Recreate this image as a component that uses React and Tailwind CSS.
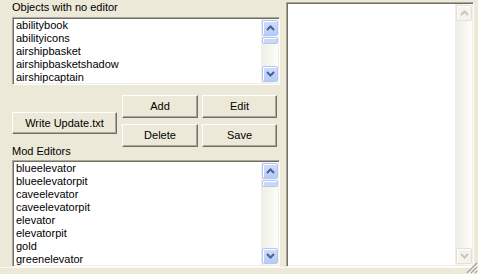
import React from 'react';

const noEditor = ['abilitybook', 'abilityicons', 'airshipbasket', 'airshipbasketshadow', 'airshipcaptain'];
const modEditors = ['blueelevator', 'blueelevatorpit', 'caveelevator', 'caveelevatorpit', 'elevator', 'elevatorpit', 'gold', 'greenelevator'];

const Arrow = ({ down, disabled }) => (
  <svg width="9" height="6" viewBox="0 0 9 6" className={down ? 'rotate-180' : ''}>
    <path d="M1 5 L4.5 1.5 L8 5" fill="none" stroke={disabled ? '#c9c7ba' : '#4d6185'} strokeWidth="2" />
  </svg>
);

const ScrollButton = ({ down, disabled }) => (
  <div
    className={
      disabled
        ? 'h-[16px] w-[16px] flex items-center justify-center rounded-[2px] border border-[#e2e0d6] bg-[#f4f3ee] shadow-[inset_1px_1px_0_#ffffff]'
        : 'h-[16px] w-[16px] flex items-center justify-center rounded-[2px] border border-[#b4c6f3] bg-gradient-to-b from-[#cfdcfd] to-[#b7cbf8] shadow-[inset_1px_1px_0_#ffffff]'
    }
  >
    <Arrow down={down} disabled={disabled} />
  </div>
);

const ScrollBar = ({ disabled }) => (
  <div className="w-[17px] h-full flex flex-col justify-between pt-[1px] pb-[1px] pl-[1px] bg-gradient-to-r from-[#eeede5] to-[#fdfdfa]">
    <div className="flex flex-col">
      <ScrollButton disabled={disabled} />
      {!disabled && (
        <div className="mt-[1px] h-[7px] w-[16px] rounded-[2px] border border-[#b4c6f3] bg-[#c8d7fc] shadow-[inset_1px_1px_0_#ffffff]" />
      )}
    </div>
    <ScrollButton down disabled={disabled} />
  </div>
);

const ListBox = ({ items, className }) => (
  <div
    className={`flex bg-white border border-t-[#aca899] border-l-[#aca899] border-r-white border-b-white shadow-[inset_1px_1px_0_#716f64,inset_-1px_-1px_0_#f1efe2] p-[1px] ${className}`}
  >
    <div className="flex-1 pl-[2px] overflow-hidden">
      {items.map((item) => (
        <div key={item} className="h-[13px] leading-[13px] whitespace-nowrap">{item}</div>
      ))}
    </div>
    <ScrollBar />
  </div>
);

const Button = ({ children, className }) => (
  <button
    className={`flex items-center justify-center bg-[#ece9d8] border border-t-white border-l-white border-r-[#716f64] border-b-[#716f64] shadow-[inset_-1px_-1px_0_#aca899] text-black ${className}`}
  >
    {children}
  </button>
);

export default function App() {
  return (
    <div className="w-[478px] h-[274px] bg-[#ece9d8] relative overflow-hidden text-[11px] text-black font-['Liberation_Sans',Arial,sans-serif]">
      <div className="flex h-[267px]">
        {/* left column */}
        <div className="pl-[12px] w-[280px] flex flex-col">
          <div className="h-[17px] pt-[1px] leading-[13px]">Objects with no editor</div>
          <ListBox items={noEditor} className="h-[68px] w-[268px]" />

          <div className="h-[62px] flex">
            <Button className="mt-[27px] w-[105px] h-[22px]">Write Update.txt</Button>
            <div className="ml-[5px] mt-[10px] grid grid-cols-[76px_75px] grid-rows-[23px_23px] gap-x-[4px] gap-y-[6px]">
              <Button>Add</Button>
              <Button>Edit</Button>
              <Button>Delete</Button>
              <Button>Save</Button>
            </div>
          </div>

          <div className="-mt-[2px] h-[15px] leading-[13px]">Mod Editors</div>
          <ListBox items={modEditors} className="h-[107px] w-[268px]" />
        </div>

        {/* right text panel */}
        <div className="ml-[6px] mt-[2px] w-[188px] h-[265px] flex bg-white border border-t-[#aca899] border-l-[#aca899] border-r-white border-b-white shadow-[inset_1px_1px_0_#716f64,inset_-1px_-1px_0_#f1efe2] p-[1px]">
          <div className="flex-1" />
          <ScrollBar disabled />
        </div>
      </div>

      <div className="h-[7px] border-t border-[#fbfaf6]" />

      {/* size grip */}
      <svg className="absolute right-0 bottom-0" width="13" height="13" viewBox="0 0 13 13">
        <path d="M12 2 L2 12 M12 6 L6 12 M12 10 L10 12" stroke="#aca899" strokeWidth="1.5" />
        <path d="M13 3 L3 13 M13 7 L7 13 M13 11 L11 13" stroke="#ffffff" strokeWidth="1" />
      </svg>
    </div>
  );
}
